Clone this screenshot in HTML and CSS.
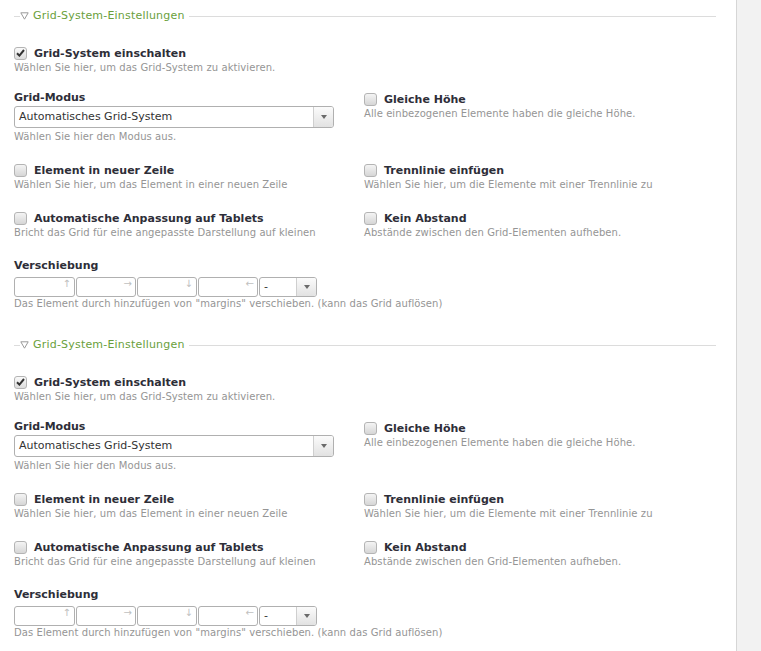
FILE: index.html
```html
<!DOCTYPE html>
<html lang="de">
<head>
<meta charset="utf-8">
<title>Grid-System-Einstellungen</title>
<link rel="stylesheet" href="styles.css">
</head>
<body>
<div class="page">
  <main class="content">
    <section class="fs">
      <div class="legend">
        <span class="lead"></span>
        <svg class="tri" width="9" height="8" viewBox="0 0 9 8"><path d="M0.8 0.8 H8.2 L4.5 7.2 Z" fill="none" stroke="#9a9a9a" stroke-width="1"/></svg>
        <span class="ltext">Grid-System-Einstellungen</span>
        <span class="rule"></span>
      </div>
      <div class="enable">
        <div class="check-row"><span class="cb checked"><svg width="9" height="8" viewBox="0 0 9 8"><path d="M1 4.2 L3.4 6.6 L8 1" fill="none" stroke="#333" stroke-width="2"/></svg></span>Grid-System einschalten</div>
        <div class="desc">Wählen Sie hier, um das Grid-System zu aktivieren.</div>
      </div>
      <div class="grid2">
        <div class="cell left-first">
          <div class="plain-label">Grid-Modus</div>
          <div class="select wide"><span class="val">Automatisches Grid-System</span><span class="btn"><span class="arr"></span></span></div>
          <div class="desc after">Wählen Sie hier den Modus aus.</div>
        </div>
        <div class="cell right-first">
          <div class="check-row"><span class="cb"></span>Gleiche Höhe</div>
          <div class="desc">Alle einbezogenen Elemente haben die gleiche Höhe.</div>
        </div>
        <div class="cell">
          <div class="check-row"><span class="cb"></span>Element in neuer Zeile</div>
          <div class="desc">Wählen Sie hier, um das Element in einer neuen Zeile</div>
        </div>
        <div class="cell">
          <div class="check-row"><span class="cb"></span>Trennlinie einfügen</div>
          <div class="desc">Wählen Sie hier, um die Elemente mit einer Trennlinie zu</div>
        </div>
        <div class="cell">
          <div class="check-row"><span class="cb"></span>Automatische Anpassung auf Tablets</div>
          <div class="desc">Bricht das Grid für eine angepasste Darstellung auf kleinen</div>
        </div>
        <div class="cell">
          <div class="check-row"><span class="cb"></span>Kein Abstand</div>
          <div class="desc">Abstände zwischen den Grid-Elementen aufheben.</div>
        </div>
        <div class="cell span2">
          <div class="plain-label">Verschiebung</div>
          <div class="offsets">
            <span class="off first">↑</span><span class="off">→</span><span class="off">↓</span><span class="off">←</span>
            <span class="select small"><span class="val">-</span><span class="btn"><span class="arr"></span></span></span>
          </div>
          <div class="desc">Das Element durch hinzufügen von "margins" verschieben. (kann das Grid auflösen)</div>
        </div>
      </div>
    </section>

    <section class="fs">
      <div class="legend">
        <span class="lead"></span>
        <svg class="tri" width="9" height="8" viewBox="0 0 9 8"><path d="M0.8 0.8 H8.2 L4.5 7.2 Z" fill="none" stroke="#9a9a9a" stroke-width="1"/></svg>
        <span class="ltext">Grid-System-Einstellungen</span>
        <span class="rule"></span>
      </div>
      <div class="enable">
        <div class="check-row"><span class="cb checked"><svg width="9" height="8" viewBox="0 0 9 8"><path d="M1 4.2 L3.4 6.6 L8 1" fill="none" stroke="#333" stroke-width="2"/></svg></span>Grid-System einschalten</div>
        <div class="desc">Wählen Sie hier, um das Grid-System zu aktivieren.</div>
      </div>
      <div class="grid2">
        <div class="cell left-first">
          <div class="plain-label">Grid-Modus</div>
          <div class="select wide"><span class="val">Automatisches Grid-System</span><span class="btn"><span class="arr"></span></span></div>
          <div class="desc after">Wählen Sie hier den Modus aus.</div>
        </div>
        <div class="cell right-first">
          <div class="check-row"><span class="cb"></span>Gleiche Höhe</div>
          <div class="desc">Alle einbezogenen Elemente haben die gleiche Höhe.</div>
        </div>
        <div class="cell">
          <div class="check-row"><span class="cb"></span>Element in neuer Zeile</div>
          <div class="desc">Wählen Sie hier, um das Element in einer neuen Zeile</div>
        </div>
        <div class="cell">
          <div class="check-row"><span class="cb"></span>Trennlinie einfügen</div>
          <div class="desc">Wählen Sie hier, um die Elemente mit einer Trennlinie zu</div>
        </div>
        <div class="cell">
          <div class="check-row"><span class="cb"></span>Automatische Anpassung auf Tablets</div>
          <div class="desc">Bricht das Grid für eine angepasste Darstellung auf kleinen</div>
        </div>
        <div class="cell">
          <div class="check-row"><span class="cb"></span>Kein Abstand</div>
          <div class="desc">Abstände zwischen den Grid-Elementen aufheben.</div>
        </div>
        <div class="cell span2">
          <div class="plain-label">Verschiebung</div>
          <div class="offsets">
            <span class="off first">↑</span><span class="off">→</span><span class="off">↓</span><span class="off">←</span>
            <span class="select small"><span class="val">-</span><span class="btn"><span class="arr"></span></span></span>
          </div>
          <div class="desc">Das Element durch hinzufügen von "margins" verschieben. (kann das Grid auflösen)</div>
        </div>
      </div>
    </section>
  </main>
  <aside class="side"></aside>
</div>
</body>
</html>
```

FILE: styles.css
```css
html, body {
  margin: 0;
  padding: 0;
  background: #fff;
}
body {
  font-family: "DejaVu Sans", Verdana, sans-serif;
  color: #2e2e38;
}
.page {
  display: flex;
  min-height: 651px;
}
.content {
  width: 736px;
  flex: none;
}
.side {
  flex: 1;
  border-left: 1px solid #d6d6d6;
  background: #f2f2f2;
}
.fs {
  padding: 9px 20px 18px 14px;
}
.legend {
  display: flex;
  align-items: center;
  height: 14px;
  font-size: 11px;
  line-height: 14px;
  color: #6a9f3c;
  letter-spacing: 0.2px;
}
.legend .lead {
  width: 6px;
  border-top: 1px solid #dcdcdc;
}
.legend .tri {
  margin: 0 4px 0 0;
  flex: none;
}
.legend .rule {
  flex: 1;
  border-top: 1px solid #dcdcdc;
  margin-left: 4px;
}
.enable {
  margin-top: 22px;
}
.check-row {
  display: flex;
  align-items: center;
  height: 16px;
  font-size: 11px;
  font-weight: bold;
  white-space: nowrap;
}
.plain-label {
  height: 16px;
  line-height: 16px;
  font-size: 11px;
  font-weight: bold;
}
.cb {
  flex: none;
  width: 13px;
  height: 13px;
  box-sizing: border-box;
  border: 1px solid #b4b4b4;
  border-radius: 3px;
  background: linear-gradient(#f4f4f4, #d6d6d6);
  margin-right: 7px;
  display: flex;
  align-items: center;
  justify-content: center;
}
.cb.checked {
  background: linear-gradient(#fafafa, #dcdcdc);
}
.desc {
  font-size: 10px;
  line-height: 14px;
  color: #959595;
  white-space: nowrap;
  letter-spacing: 0.08px;
}
.desc.after {
  margin-top: 2px;
}
.grid2 {
  display: grid;
  grid-template-columns: 350px 1fr;
  row-gap: 18px;
  margin-top: 14px;
}
.left-first {
  margin-top: 1px;
}
.right-first {
  margin-top: 2px;
}
.span2 {
  grid-column: 1 / 3;
}
.select {
  display: flex;
  box-sizing: border-box;
  height: 22px;
  border: 1px solid #b0b0b0;
  border-radius: 3px;
  background: #fff;
  font-size: 11px;
  color: #333;
}
.select.wide {
  width: 320px;
}
.select .val {
  flex: 1;
  padding-left: 4px;
  line-height: 20px;
}
.select .btn {
  width: 19px;
  flex: none;
  border-left: 1px solid #cfcfcf;
  background: linear-gradient(#fbfbfb, #e2e2e2);
  border-radius: 0 2px 2px 0;
  display: flex;
  align-items: center;
  justify-content: center;
}
.arr {
  width: 0;
  height: 0;
  border-left: 3px solid transparent;
  border-right: 3px solid transparent;
  border-top: 4px solid #6a6a6a;
}
.offsets {
  display: flex;
  gap: 1px;
  margin-top: 3px;
  height: 20px;
}
.off {
  width: 60px;
  height: 20px;
  box-sizing: border-box;
  border: 1px solid #b0b0b0;
  border-radius: 3px;
  display: flex;
  justify-content: flex-end;
  align-items: flex-start;
  padding: 0 3px;
  font-size: 10px;
  line-height: 11px;
  color: #c0c0c0;
}
.off.first {
  width: 61px;
}
.select.small {
  width: 58px;
  height: 20px;
}
.select.small .val {
  line-height: 18px;
}
```
